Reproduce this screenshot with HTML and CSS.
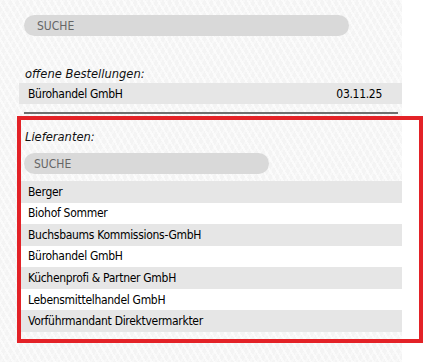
FILE: index.html
```html
<!DOCTYPE html>
<html lang="de">
<head>
<meta charset="utf-8">
<title>Bestellungen</title>
<link rel="stylesheet" href="styles.css">
</head>
<body>
<div class="page">
  <div class="search search-main"><span class="search-text">SUCHE</span></div>

  <section class="orders">
    <div class="label">offene Bestellungen:</div>
    <div class="row row-gray row-split"><span>Bürohandel GmbH</span><span class="date">03.11.25</span></div>
  </section>

  <div class="divider"></div>

  <section class="suppliers">
    <div class="highlight"></div>
    <div class="label label-suppliers">Lieferanten:</div>
    <div class="search search-small"><span class="search-text">SUCHE</span></div>
    <ul class="list">
      <li class="row row-gray">Berger</li>
      <li class="row row-white">Biohof Sommer</li>
      <li class="row row-gray">Buchsbaums Kommissions-GmbH</li>
      <li class="row row-white">Bürohandel GmbH</li>
      <li class="row row-gray">Küchenprofi &amp; Partner GmbH</li>
      <li class="row row-white">Lebensmittelhandel GmbH</li>
      <li class="row row-gray">Vorführmandant Direktvermarkter</li>
    </ul>
  </section>
</div>
</body>
</html>
```

FILE: styles.css
```css
html, body {
  margin: 0;
  padding: 0;
  background: #ffffff;
}

body {
  font-family: "DejaVu Sans Condensed", "DejaVu Sans", sans-serif;
  font-size: 12px;
  color: #000;
  height: 362px;
  overflow: hidden;
}

.page {
  width: 383px;
  min-height: 362px;
  padding: 15px 0 0 19px;
  box-sizing: content-box;
  background-color: #f4f4f4;
  background-image:
    repeating-linear-gradient(60deg, rgba(255,255,255,0.6) 0 2px, transparent 2px 6px),
    repeating-linear-gradient(-60deg, rgba(255,255,255,0.35) 0 2px, transparent 2px 6px);
}

.search {
  height: 21px;
  border-radius: 11px;
  background: #d9d9d9;
  display: flex;
  align-items: center;
  margin-left: 5px;
}

.search-text {
  font-size: 12px;
  color: #666;
}

.search-main {
  width: 325px;
  padding-left: 13px;
  box-sizing: border-box;
}

.search-small {
  width: 245px;
  padding-left: 10px;
  box-sizing: border-box;
  margin-top: 7px;
}

.label {
  font-size: 12.8px;
  font-style: italic;
  line-height: 18px;
  padding-left: 6px;
  color: #111;
}

.label-suppliers {
  margin-top: 2px;
}

.orders {
  margin-top: 29px;
}

.row {
  display: flex;
  align-items: center;
  height: 21.57px;
  padding: 0 20px 0 9px;
  box-sizing: border-box;
  font-size: 12px;
  letter-spacing: -0.3px;
}

.orders .row {
  height: 21px;
}

.row-split {
  justify-content: space-between;
}

.row-gray { background: #e6e6e6; }
.row-white { background: #ffffff; }

.divider {
  height: 2px;
  background: #6f6f6f;
  margin: 8px 4px 0 5px;
}

.suppliers {
  position: relative;
  margin-top: 2px;
  padding: 10px 0 11px;
}

.highlight {
  position: absolute;
  top: 0;
  bottom: 0;
  left: -2px;
  right: -21px;
  border: 4px solid #e32227;
  pointer-events: none;
}

.list {
  list-style: none;
  margin: 7px 0 0;
  padding: 0;
}
```
